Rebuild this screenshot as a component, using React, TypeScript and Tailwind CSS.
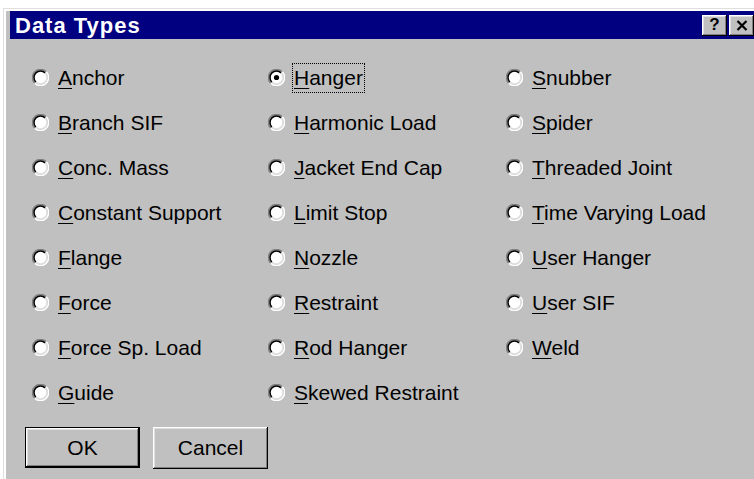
const font = { fontFamily: '"Liberation Sans", Arial, sans-serif' };

type Item = { label: string; checked?: boolean };

const columns: Item[][] = [
  [
    { label: "Anchor" },
    { label: "Branch SIF" },
    { label: "Conc. Mass" },
    { label: "Constant Support" },
    { label: "Flange" },
    { label: "Force" },
    { label: "Force Sp. Load" },
    { label: "Guide" },
  ],
  [
    { label: "Hanger", checked: true },
    { label: "Harmonic Load" },
    { label: "Jacket End Cap" },
    { label: "Limit Stop" },
    { label: "Nozzle" },
    { label: "Restraint" },
    { label: "Rod Hanger" },
    { label: "Skewed Restraint" },
  ],
  [
    { label: "Snubber" },
    { label: "Spider" },
    { label: "Threaded Joint" },
    { label: "Time Varying Load" },
    { label: "User Hanger" },
    { label: "User SIF" },
    { label: "Weld" },
  ],
];

// classic sunken radio: dark arcs top-left, light arcs bottom-right
function Radio({ checked }: { checked?: boolean }) {
  return (
    <svg width="17" height="17" viewBox="0 0 17 17" className="shrink-0">
      <circle cx="8.5" cy="8.5" r="6.5" fill="#fff" />
      <path d="M2.8 14.2A8 8 0 0 1 14.2 2.8" fill="none" stroke="#808080" strokeWidth="1.5" />
      <path d="M3.9 13.1A6.5 6.5 0 0 1 13.1 3.9" fill="none" stroke="#000" strokeWidth="1.5" />
      <path d="M14.2 2.8A8 8 0 0 1 2.8 14.2" fill="none" stroke="#fff" strokeWidth="1.5" />
      <path d="M13.1 3.9A6.5 6.5 0 0 1 3.9 13.1" fill="none" stroke="#dfdfdf" strokeWidth="1.5" />
      {checked && <circle cx="8.5" cy="8.5" r="2.6" fill="#000" />}
    </svg>
  );
}

function Option({ label, checked }: Item) {
  return (
    <div className="flex h-[45px] items-center gap-[7px]">
      <Radio checked={checked} />
      <span
        className={`border px-[1px] text-[21px] leading-[28px] text-black ${
          checked ? "border-dotted border-black" : "border-transparent"
        }`}
      >
        <span className="underline decoration-1 underline-offset-[3px]">{label[0]}</span>
        {label.slice(1)}
      </span>
    </div>
  );
}

const bevel =
  "shadow-[inset_-1px_-1px_#000,inset_1px_1px_#fff,inset_-2px_-2px_#808080,inset_2px_2px_#dfdfdf]";

export default function App() {
  return (
    <div className="h-[479px] w-[754px] overflow-hidden bg-white pl-[3px] pt-[8px]" style={font}>
      <div className="h-[500px] w-[780px] border-l border-t border-[#dfdfdf]">
        <div className="h-full border-l-2 border-t-2 border-white bg-[#c0c0c0] pl-[4px]">
          {/* title bar */}
          <div className="flex h-[28px] w-[746px] items-center bg-[#000080] pl-[5px] pr-[2px]">
            <span className="text-[22px] font-bold tracking-[1px] text-white">Data Types</span>
            <div className="ml-auto flex gap-[2px]">
              <button className={`flex h-[21px] w-[25px] items-center justify-center bg-[#c0c0c0] pb-[1px] text-[17px] font-bold leading-none text-black ${bevel}`}>
                ?
              </button>
              <button className={`flex h-[21px] w-[25px] items-center justify-center bg-[#c0c0c0] ${bevel}`}>
                <svg width="12" height="11" viewBox="0 0 12 11">
                  <path d="M1.5 1L10.5 10M10.5 1L1.5 10" stroke="#000" strokeWidth="2.2" />
                </svg>
              </button>
            </div>
          </div>

          {/* option grid */}
          <div className="grid grid-cols-[236px_238px_auto] pl-[22px] pt-[16px]">
            {columns.map((col, i) => (
              <div key={i} className="flex flex-col">
                {col.map((item) => (
                  <Option key={item.label} {...item} />
                ))}
              </div>
            ))}
          </div>

          {/* dialog buttons */}
          <div className="mt-[12px] flex gap-[13px] pl-[15px]">
            <button className="h-[41px] w-[115px] border border-black bg-[#c0c0c0] p-0">
              <div className={`flex h-full w-full items-center justify-center text-[21px] text-black ${bevel}`}>
                OK
              </div>
            </button>
            <button className={`flex h-[42px] w-[115px] items-center justify-center bg-[#c0c0c0] text-[21px] text-black ${bevel}`}>
              Cancel
            </button>
          </div>
        </div>
      </div>
    </div>
  );
}
